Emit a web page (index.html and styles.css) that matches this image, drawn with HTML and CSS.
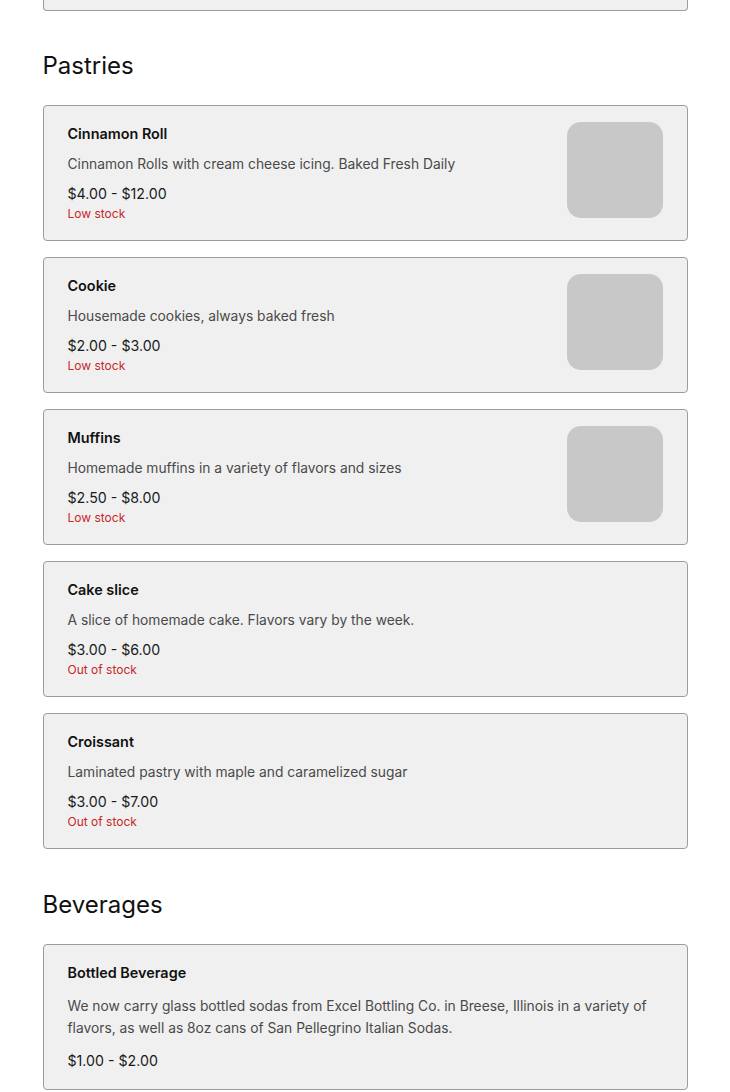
FILE: index.html
```html
<!DOCTYPE html>
<html lang="en">
<head>
<meta charset="utf-8">
<title>Menu</title>
<link rel="stylesheet" href="styles.css">
</head>
<body>
<main class="menu">
  <div class="card-tail"></div>

  <section class="section">
    <h2 class="section-title">Pastries</h2>
    <div class="items">
      <article class="card">
        <div class="card-body">
          <h3 class="item-name">Cinnamon Roll</h3>
          <p class="item-desc">Cinnamon Rolls with cream cheese icing. Baked Fresh Daily</p>
          <p class="item-price">$4.00 - $12.00</p>
          <p class="item-stock">Low stock</p>
        </div>
        <div class="item-thumb"></div>
      </article>
      <article class="card">
        <div class="card-body">
          <h3 class="item-name">Cookie</h3>
          <p class="item-desc">Housemade cookies, always baked fresh</p>
          <p class="item-price">$2.00 - $3.00</p>
          <p class="item-stock">Low stock</p>
        </div>
        <div class="item-thumb"></div>
      </article>
      <article class="card">
        <div class="card-body">
          <h3 class="item-name">Muffins</h3>
          <p class="item-desc">Homemade muffins in a variety of flavors and sizes</p>
          <p class="item-price">$2.50 - $8.00</p>
          <p class="item-stock">Low stock</p>
        </div>
        <div class="item-thumb"></div>
      </article>
      <article class="card">
        <div class="card-body">
          <h3 class="item-name">Cake slice</h3>
          <p class="item-desc">A slice of homemade cake. Flavors vary by the week.</p>
          <p class="item-price">$3.00 - $6.00</p>
          <p class="item-stock">Out of stock</p>
        </div>
      </article>
      <article class="card">
        <div class="card-body">
          <h3 class="item-name">Croissant</h3>
          <p class="item-desc">Laminated pastry with maple and caramelized sugar</p>
          <p class="item-price">$3.00 - $7.00</p>
          <p class="item-stock">Out of stock</p>
        </div>
      </article>
    </div>
  </section>

  <section class="section">
    <h2 class="section-title">Beverages</h2>
    <div class="items">
      <article class="card card-loose">
        <div class="card-body">
          <h3 class="item-name">Bottled Beverage</h3>
          <p class="item-desc">We now carry glass bottled sodas from Excel Bottling Co. in Breese, Illinois in a variety of flavors, as well as 8oz cans of San Pellegrino Italian Sodas.</p>
          <p class="item-price">$1.00 - $2.00</p>
        </div>
      </article>
    </div>
  </section>
</main>
</body>
</html>
```

FILE: styles.css
```css
* { box-sizing: border-box; }

html, body {
  margin: 0;
  padding: 0;
  background: #ffffff;
}

body {
  font-family: Inter, "Liberation Sans", Arial, sans-serif;
  color: #1a1a1a;
}

.menu {
  width: 645px;
  margin: 0 auto;
}

.card-tail {
  height: 11px;
  background: #f0f0f0;
  border: 1px solid #9c9c9c;
  border-top: none;
  border-radius: 0 0 4px 4px;
}

.section {
  margin-top: 39px;
}

.section + .section {
  margin-top: 40px;
}

.section-title {
  margin: 0 0 23px;
  font-size: 24px;
  line-height: 32px;
  font-weight: 400;
  color: #111111;
}

.items {
  display: flex;
  flex-direction: column;
  gap: 16px;
}

.card {
  display: flex;
  align-items: flex-start;
  justify-content: space-between;
  gap: 24px;
  padding: 16px 24px 18px;
  background: #f0f0f0;
  border: 1px solid #9c9c9c;
  border-radius: 4px;
}

.card-body {
  display: flex;
  flex-direction: column;
  min-width: 0;
}

.item-name {
  margin: 0;
  font-size: 14.4px;
  line-height: 24px;
  font-weight: 600;
  color: #111111;
}

.item-desc {
  margin: 6px 0 0;
  font-size: 13.8px;
  line-height: 24px;
  color: #4a4a4a;
}

.item-price {
  margin: 6px 0 0;
  font-size: 14.2px;
  line-height: 24px;
  color: #1a1a1a;
}

.item-stock {
  margin: 0;
  font-size: 12px;
  line-height: 16px;
  color: #c62828;
}

.card-loose {
  padding-bottom: 16px;
}

.card-loose .item-desc {
  margin-top: 10px;
  line-height: 22px;
}

.card-loose .item-price {
  margin-top: 10px;
}

.item-thumb {
  flex: 0 0 96px;
  width: 96px;
  height: 96px;
  background: #c8c8c8;
  border-radius: 14px;
}
```
